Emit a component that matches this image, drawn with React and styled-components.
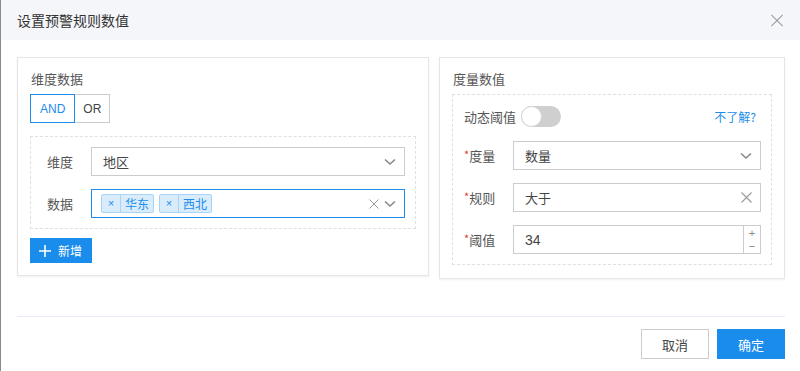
import React from "react";
import styled, { createGlobalStyle } from "styled-components";

const GlobalStyle = createGlobalStyle`
  body {
    margin: 0;
    background: #fff;
    font-family: "Noto Sans CJK SC", "Noto Sans", sans-serif;
    color: #333;
  }
`;

const BLUE = "#1a8cec";

const Dialog = styled.div`
  width: 800px;
  height: 371px;
  box-sizing: border-box;
  border-left: 1px solid #8a8a8a;
  display: flex;
  flex-direction: column;
`;

const Header = styled.div`
  height: 40px;
  flex: none;
  background: #f5f6fa;
  display: flex;
  align-items: center;
  justify-content: space-between;
  padding: 0 15px 0 16px;
  font-size: 14px;
  color: #333;
`;

const Close = styled.span`
  width: 12px;
  height: 12px;
  position: relative;
  margin-right: 2px;
  &::before,
  &::after {
    content: "";
    position: absolute;
    left: -2px;
    top: 5.5px;
    width: 16px;
    height: 1px;
    background: #999;
    transform: rotate(45deg);
  }
  &::after {
    transform: rotate(-45deg);
  }
`;

const Body = styled.div`
  display: flex;
  align-items: flex-start;
  gap: 10px;
  padding: 17px 15px 0 16px;
  height: 259px;
  flex: none;
  box-sizing: border-box;
`;

const Card = styled.div`
  width: ${(p) => p.w}px;
  height: ${(p) => p.h}px;
  box-sizing: border-box;
  border: 1px solid #e6e6e6;
  box-shadow: 0 1px 2px rgba(0, 0, 0, 0.06);
  padding: 12px;
  display: flex;
  flex-direction: column;
  align-items: flex-start;
`;

const CardTitle = styled.div`
  font-size: 13px;
  line-height: 18px;
  color: #555;
  padding-left: 1px;
  margin-bottom: 6px;
`;

const Segment = styled.div`
  display: flex;
`;

const SegBtn = styled.div`
  height: 29px;
  box-sizing: border-box;
  padding: 0 ${(p) => (p.active ? 9 : 8)}px;
  display: flex;
  align-items: center;
  font-size: 12px;
  font-family: "Liberation Sans", Arial, sans-serif;
  color: ${(p) => (p.active ? BLUE : "#444")};
  border: 1px solid ${(p) => (p.active ? BLUE : "#ccc")};
  ${(p) => (p.active ? "" : "border-left: none;")}
`;

const Dashed = styled.div`
  align-self: stretch;
  border: 1px dashed #e0e0e0;
  margin-top: ${(p) => p.mt || 0}px;
  padding: 10px ${(p) => p.pr}px 10px ${(p) => p.pl}px;
  display: flex;
  flex-direction: column;
  gap: 13px;
`;

const Row = styled.div`
  display: flex;
  align-items: center;
  height: ${(p) => p.h || 29}px;
`;

const Label = styled.div`
  width: ${(p) => (p.w ? `${p.w}px` : "auto")};
  flex: none;
  font-size: 13px;
  color: #555;
`;

const Star = styled.span`
  color: #e4393c;
  font-size: 11px;
  position: relative;
  top: -2px;
`;

const Field = styled.div`
  flex: 1;
  height: 29px;
  box-sizing: border-box;
  border: 1px solid ${(p) => (p.focus ? BLUE : "#ccc")};
  display: flex;
  align-items: center;
  padding: 0 ${(p) => p.pr ?? 8}px 0 ${(p) => p.pl || 11}px;
  font-size: 13px;
  color: #444;
  gap: 5px;
`;

const Value = styled.span`
  flex: 1;
  font-family: ${(p) => (p.num ? '"Liberation Sans", Arial, sans-serif' : "inherit")};
  font-size: ${(p) => (p.num ? 14 : 13)}px;
`;

const Tag = styled.span`
  height: 19px;
  box-sizing: border-box;
  display: flex;
  align-items: center;
  border: 1px solid #a8d4f7;
  background: #d9ecfc;
  color: ${BLUE};
  font-size: 12px;
  border-radius: 2px;
`;

const TagX = styled.span`
  width: 18px;
  text-align: center;
  border-right: 1px solid #a8d4f7;
  font-family: "Liberation Sans", Arial, sans-serif;
  font-size: 11px;
  line-height: 17px;
`;

const TagText = styled.span`
  padding: 0 4px;
`;

const Tags = styled.div`
  flex: 1;
  display: flex;
  gap: 5px;
  margin-left: -1px;
`;

const Chevron = () => (
  <svg width="12" height="8" viewBox="0 0 12 8">
    <path d="M1 1.5 L6 6 L11 1.5" fill="none" stroke="#888" strokeWidth="1.6" />
  </svg>
);

const Cross = ({ size = 11, color = "#999" }) => (
  <svg width={size} height={size} viewBox="0 0 11 11">
    <path d="M0.5 0.5 L10.5 10.5 M10.5 0.5 L0.5 10.5" stroke={color} strokeWidth="1.1" />
  </svg>
);

const AddBtn = styled.div`
  margin-top: 9px;
  height: 26px;
  width: 62px;
  box-sizing: border-box;
  background: ${BLUE};
  color: #fff;
  font-size: 12px;
  display: flex;
  align-items: center;
  gap: 7px;
  padding-left: 9px;
`;

const Toggle = styled.div`
  width: 40px;
  height: 21px;
  border-radius: 11px;
  background: #cfcfcf;
  position: relative;
  margin-left: 5px;
  &::after {
    content: "";
    position: absolute;
    left: 0;
    top: 0;
    width: 21px;
    height: 21px;
    box-sizing: border-box;
    border-radius: 50%;
    background: #fff;
    border: 1px solid #d6d6d6;
  }
`;

const Help = styled.span`
  margin-left: auto;
  color: ${BLUE};
  font-size: 12px;
  margin-right: 5px;
`;

const Stepper = styled.div`
  width: 16px;
  align-self: stretch;
  border-left: 1px solid #ccc;
  display: flex;
  flex-direction: column;
  align-items: center;
  justify-content: space-around;
  color: #888;
  font-size: 11px;
  line-height: 10px;
  font-family: "Liberation Sans", Arial, sans-serif;
`;

const Footer = styled.div`
  margin: 17px 15px 0 16px;
  border-top: 1px solid #eae9f4;
  padding-top: 12px;
  display: flex;
  justify-content: flex-end;
  gap: 8px;
`;

const Button = styled.div`
  width: 68px;
  height: 30px;
  box-sizing: border-box;
  display: flex;
  align-items: center;
  justify-content: center;
  font-size: 13px;
  background: ${(p) => (p.primary ? BLUE : "#fff")};
  color: ${(p) => (p.primary ? "#fff" : "#444")};
  border: 1px solid ${(p) => (p.primary ? BLUE : "#ccc")};
`;

export default function App() {
  return (
    <Dialog>
      <GlobalStyle />
      <Header>
        <span>设置预警规则数值</span>
        <Close />
      </Header>
      <Body>
        <Card w={412} h={219}>
          <CardTitle>维度数据</CardTitle>
          <Segment>
            <SegBtn active>AND</SegBtn>
            <SegBtn>OR</SegBtn>
          </Segment>
          <Dashed mt={13} pl={16} pr={10}>
            <Row>
              <Label w={44}>维度</Label>
              <Field>
                <Value>地区</Value>
                <Chevron />
              </Field>
            </Row>
            <Row>
              <Label w={44}>数据</Label>
              <Field focus pl={10}>
                <Tags>
                  <Tag>
                    <TagX>×</TagX>
                    <TagText>华东</TagText>
                  </Tag>
                  <Tag>
                    <TagX>×</TagX>
                    <TagText>西北</TagText>
                  </Tag>
                </Tags>
                <Cross size={10} />
                <Chevron />
              </Field>
            </Row>
          </Dashed>
          <AddBtn>
            <svg width="12" height="12" viewBox="0 0 12 12">
              <path d="M6 0 V12 M0 6 H12" stroke="#fff" strokeWidth="1.6" />
            </svg>
            新增
          </AddBtn>
        </Card>
        <Card w={346} h={222}>
          <CardTitle>度量数值</CardTitle>
          <Dashed pl={11} pr={10}>
            <Row h={22} style={{ marginBottom: 1 }}>
              <Label>动态阈值</Label>
              <Toggle />
              <Help>不了解?</Help>
            </Row>
            <Row>
              <Label w={49}>
                <Star>*</Star>度量
              </Label>
              <Field>
                <Value>数量</Value>
                <Chevron />
              </Field>
            </Row>
            <Row>
              <Label w={49}>
                <Star>*</Star>规则
              </Label>
              <Field>
                <Value>大于</Value>
                <Cross size={11} />
              </Field>
            </Row>
            <Row>
              <Label w={49}>
                <Star>*</Star>阈值
              </Label>
              <Field pr={0}>
                <Value num>34</Value>
                <Stepper>
                  <span>+</span>
                  <span>−</span>
                </Stepper>
              </Field>
            </Row>
          </Dashed>
        </Card>
      </Body>
      <Footer>
        <Button>取消</Button>
        <Button primary>确定</Button>
      </Footer>
    </Dialog>
  );
}
